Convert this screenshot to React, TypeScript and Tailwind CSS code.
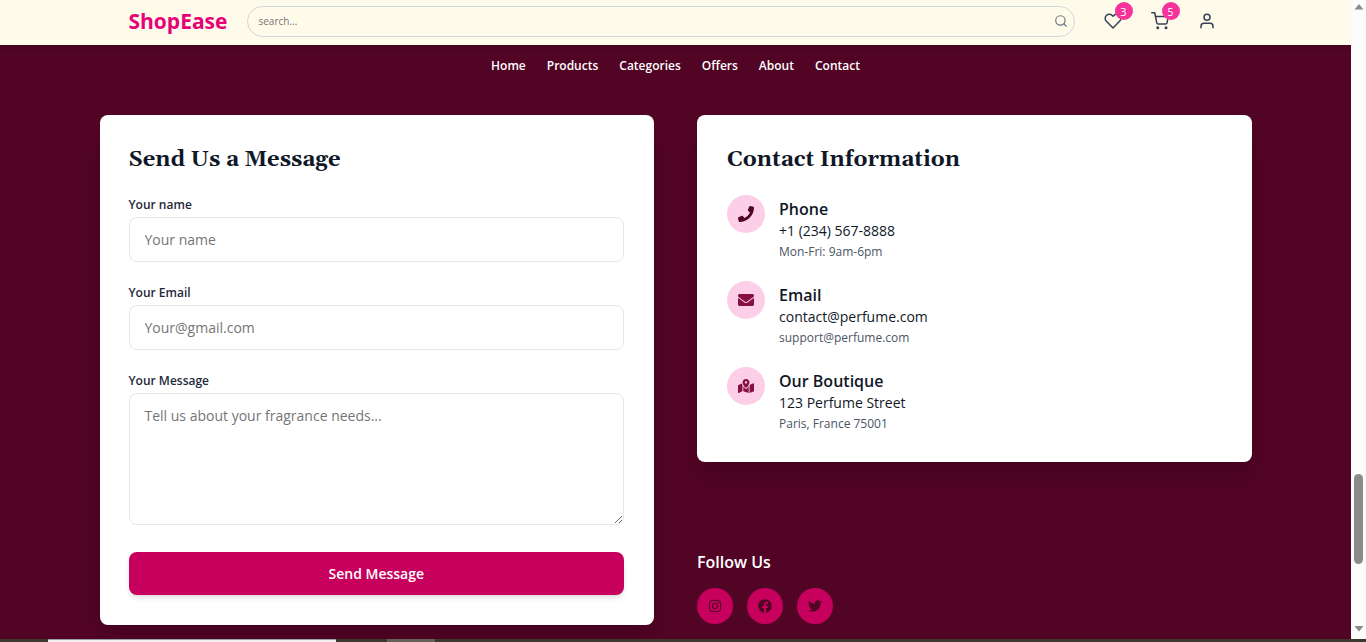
import type { ReactNode } from "react";
import { FiHeart, FiSearch, FiShoppingCart, FiUser } from "react-icons/fi";
import {
  FaEnvelope,
  FaFacebook,
  FaInstagram,
  FaMapMarkedAlt,
  FaPhone,
  FaTwitter,
} from "react-icons/fa";

const links = ["Home", "Products", "Categories", "Offers", "About", "Contact"];

const contacts = [
  {
    title: "Phone",
    line: "+1 (234) 567-8888",
    note: "Mon-Fri: 9am-6pm",
    icon: <FaPhone className="size-4 text-pink-950" />,
  },
  {
    title: "Email",
    line: "contact@perfume.com",
    note: "support@perfume.com",
    icon: <FaEnvelope className="size-4 text-pink-900" />,
  },
  {
    title: "Our Boutique",
    line: "123 Perfume Street",
    note: "Paris, France 75001",
    icon: <FaMapMarkedAlt className="size-4 text-pink-900" />,
  },
];

const socials = [
  { name: "Instagram", icon: <FaInstagram className="size-[14px]" /> },
  { name: "Facebook", icon: <FaFacebook className="size-[14px]" /> },
  { name: "Twitter", icon: <FaTwitter className="size-[14px]" /> },
];

function IconButton({ label, count, children }: { label: string; count?: number; children: ReactNode }) {
  return (
    <button
      type="button"
      aria-label={label}
      className="relative flex size-8 items-center justify-center text-gray-700"
    >
      {children}
      {count !== undefined && (
        <span className="absolute -top-[3px] -right-1 flex size-[18px] items-center justify-center rounded-full bg-pink-500 text-[11px] leading-none text-white">
          {count}
        </span>
      )}
    </button>
  );
}

function Header() {
  return (
    <header className="relative z-10 bg-amber-50 shadow-md">
      <div className="mx-auto flex h-[45px] max-w-[1152px] items-center px-[29px] pb-[3px]">
        <a href="#home" className="mr-5 pt-[2px] text-[21px] font-bold text-pink-600">
          ShopEase
        </a>
        <form className="relative mr-[22px] grow">
          <input
            type="search"
            aria-label="Search"
            placeholder="search..."
            className="block h-[31px] w-full rounded-full border border-gray-300 px-[10px] text-[10px] outline-none placeholder:text-[#757575]"
          />
          <button
            type="submit"
            aria-label="Submit search"
            className="absolute top-2 right-[7px] text-gray-500"
          >
            <FiSearch className="size-[14px]" />
          </button>
        </form>
        <div className="flex gap-[15px]">
          <IconButton label="Wishlist" count={3}>
            <FiHeart className="size-[18px]" />
          </IconButton>
          <IconButton label="Cart" count={5}>
            <FiShoppingCart className="size-[18px]" />
          </IconButton>
          <IconButton label="Account">
            <FiUser className="size-[18px]" />
          </IconButton>
        </div>
      </div>
    </header>
  );
}

function Nav() {
  return (
    <nav className="flex h-[42px] items-center justify-center gap-[21px] text-xs font-semibold text-white">
      {links.map((link) => (
        <a key={link} href={"#" + link.toLowerCase()}>
          {link}
        </a>
      ))}
    </nav>
  );
}

function Field({ id, label, children }: { id: string; label: string; children: ReactNode }) {
  return (
    <div>
      <label htmlFor={id} className="mb-[2px] block text-xs leading-5 font-semibold text-gray-800">
        {label}
      </label>
      {children}
    </div>
  );
}

function MessageForm() {
  return (
    <section className="rounded-lg bg-white pt-[31px] pr-[30px] pb-[30px] pl-[29px] shadow-xl">
      <h2 className="mb-5 font-['Gelasio','Georgia','Liberation_Serif',serif] text-[22px] leading-[29px] font-bold text-gray-900">
        Send Us a Message
      </h2>
      <form className="flex flex-col gap-[21px]">
        <Field id="name" label="Your name">
          <input
            id="name"
            type="text"
            placeholder="Your name"
            className="block h-[45px] w-full rounded-lg border border-gray-200 px-[15px] text-sm placeholder:text-[#757575]"
          />
        </Field>
        <Field id="email" label="Your Email">
          <input
            id="email"
            type="email"
            placeholder="Your@gmail.com"
            className="block h-[45px] w-full rounded-lg border border-gray-200 px-[15px] text-sm placeholder:text-[#757575]"
          />
        </Field>
        <Field id="message" label="Your Message">
          <textarea
            id="message"
            placeholder="Tell us about your fragrance needs..."
            className="block h-[132px] w-full rounded-lg border border-gray-200 px-[15px] py-3 text-sm placeholder:text-[#757575]"
          />
        </Field>
        <button
          type="submit"
          className="mt-[6px] h-[43px] rounded-lg bg-pink-700 text-sm font-semibold text-white shadow-md"
        >
          Send Message
        </button>
      </form>
    </section>
  );
}

function ContactInfo() {
  return (
    <section className="rounded-lg bg-white px-[30px] pt-[31px] pb-7 shadow-xl">
      <h2 className="mb-5 font-['Gelasio','Georgia','Liberation_Serif',serif] text-[22px] leading-[29px] font-bold text-gray-900">
        Contact Information
      </h2>
      <ul className="flex flex-col gap-[19px]">
        {contacts.map((item) => (
          <li key={item.title} className="flex gap-[14px]">
            <span className="flex size-[38px] shrink-0 items-center justify-center rounded-full bg-pink-200">
              {item.icon}
            </span>
            <div className="pt-[3px]">
              <h3 className="text-base leading-[22px] font-semibold text-gray-900">{item.title}</h3>
              <p className="text-sm leading-[22px] text-gray-900">{item.line}</p>
              <p className="text-xs leading-5 text-gray-600">{item.note}</p>
            </div>
          </li>
        ))}
      </ul>
    </section>
  );
}

function FollowUs() {
  return (
    <section className="mt-[88px]">
      <h3 className="mb-[14px] text-base font-semibold text-white">Follow Us</h3>
      <div className="flex gap-[14px]">
        {socials.map((item) => (
          <a
            key={item.name}
            href={"#" + item.name.toLowerCase()}
            aria-label={item.name}
            className="flex size-9 items-center justify-center rounded-full bg-pink-700 text-pink-950"
          >
            {item.icon}
          </a>
        ))}
      </div>
    </section>
  );
}

function ScrollTrack() {
  return (
    <div aria-hidden="true" className="flex w-[15px] shrink-0 flex-col items-center bg-[#fcfcfc] pt-1 pb-[7px] text-[#8b8b8b]">
      <svg viewBox="0 0 10 6" className="h-[6px] w-[10px]">
        <path d="M5 0 9.5 5.5H.5Z" fill="currentColor" />
      </svg>
      <div className="grow-[464]" />
      <div className="h-[90px] w-[9px] rounded-full bg-[#8b8b8b]" />
      <div className="grow-[62]" />
      <svg viewBox="0 0 10 6" className="h-[6px] w-[10px]">
        <path d="M5 5.5 .5 0h9Z" fill="currentColor" />
      </svg>
    </div>
  );
}

export default function App() {
  return (
    <div className="flex h-screen flex-col overflow-hidden font-['Segoe_UI','Open_Sans','Noto_Sans',sans-serif]">
      <div className="flex min-h-0 grow">
        <div className="grow overflow-hidden bg-pink-950">
          <Header />
          <Nav />
          <main className="mx-auto grid max-w-[1152px] grid-cols-2 items-start gap-[43px] pt-7 pb-12">
            <MessageForm />
            <div>
              <ContactInfo />
              <FollowUs />
            </div>
          </main>
        </div>
        <ScrollTrack />
      </div>
      <div aria-hidden="true" className="flex h-[3px] shrink-0 bg-[#3d352e]">
        <div className="ml-12 w-72 border-t border-gray-400 bg-[#f3eef0]" />
        <div className="ml-[51px] w-12 bg-[#665f5b]" />
      </div>
    </div>
  );
}
